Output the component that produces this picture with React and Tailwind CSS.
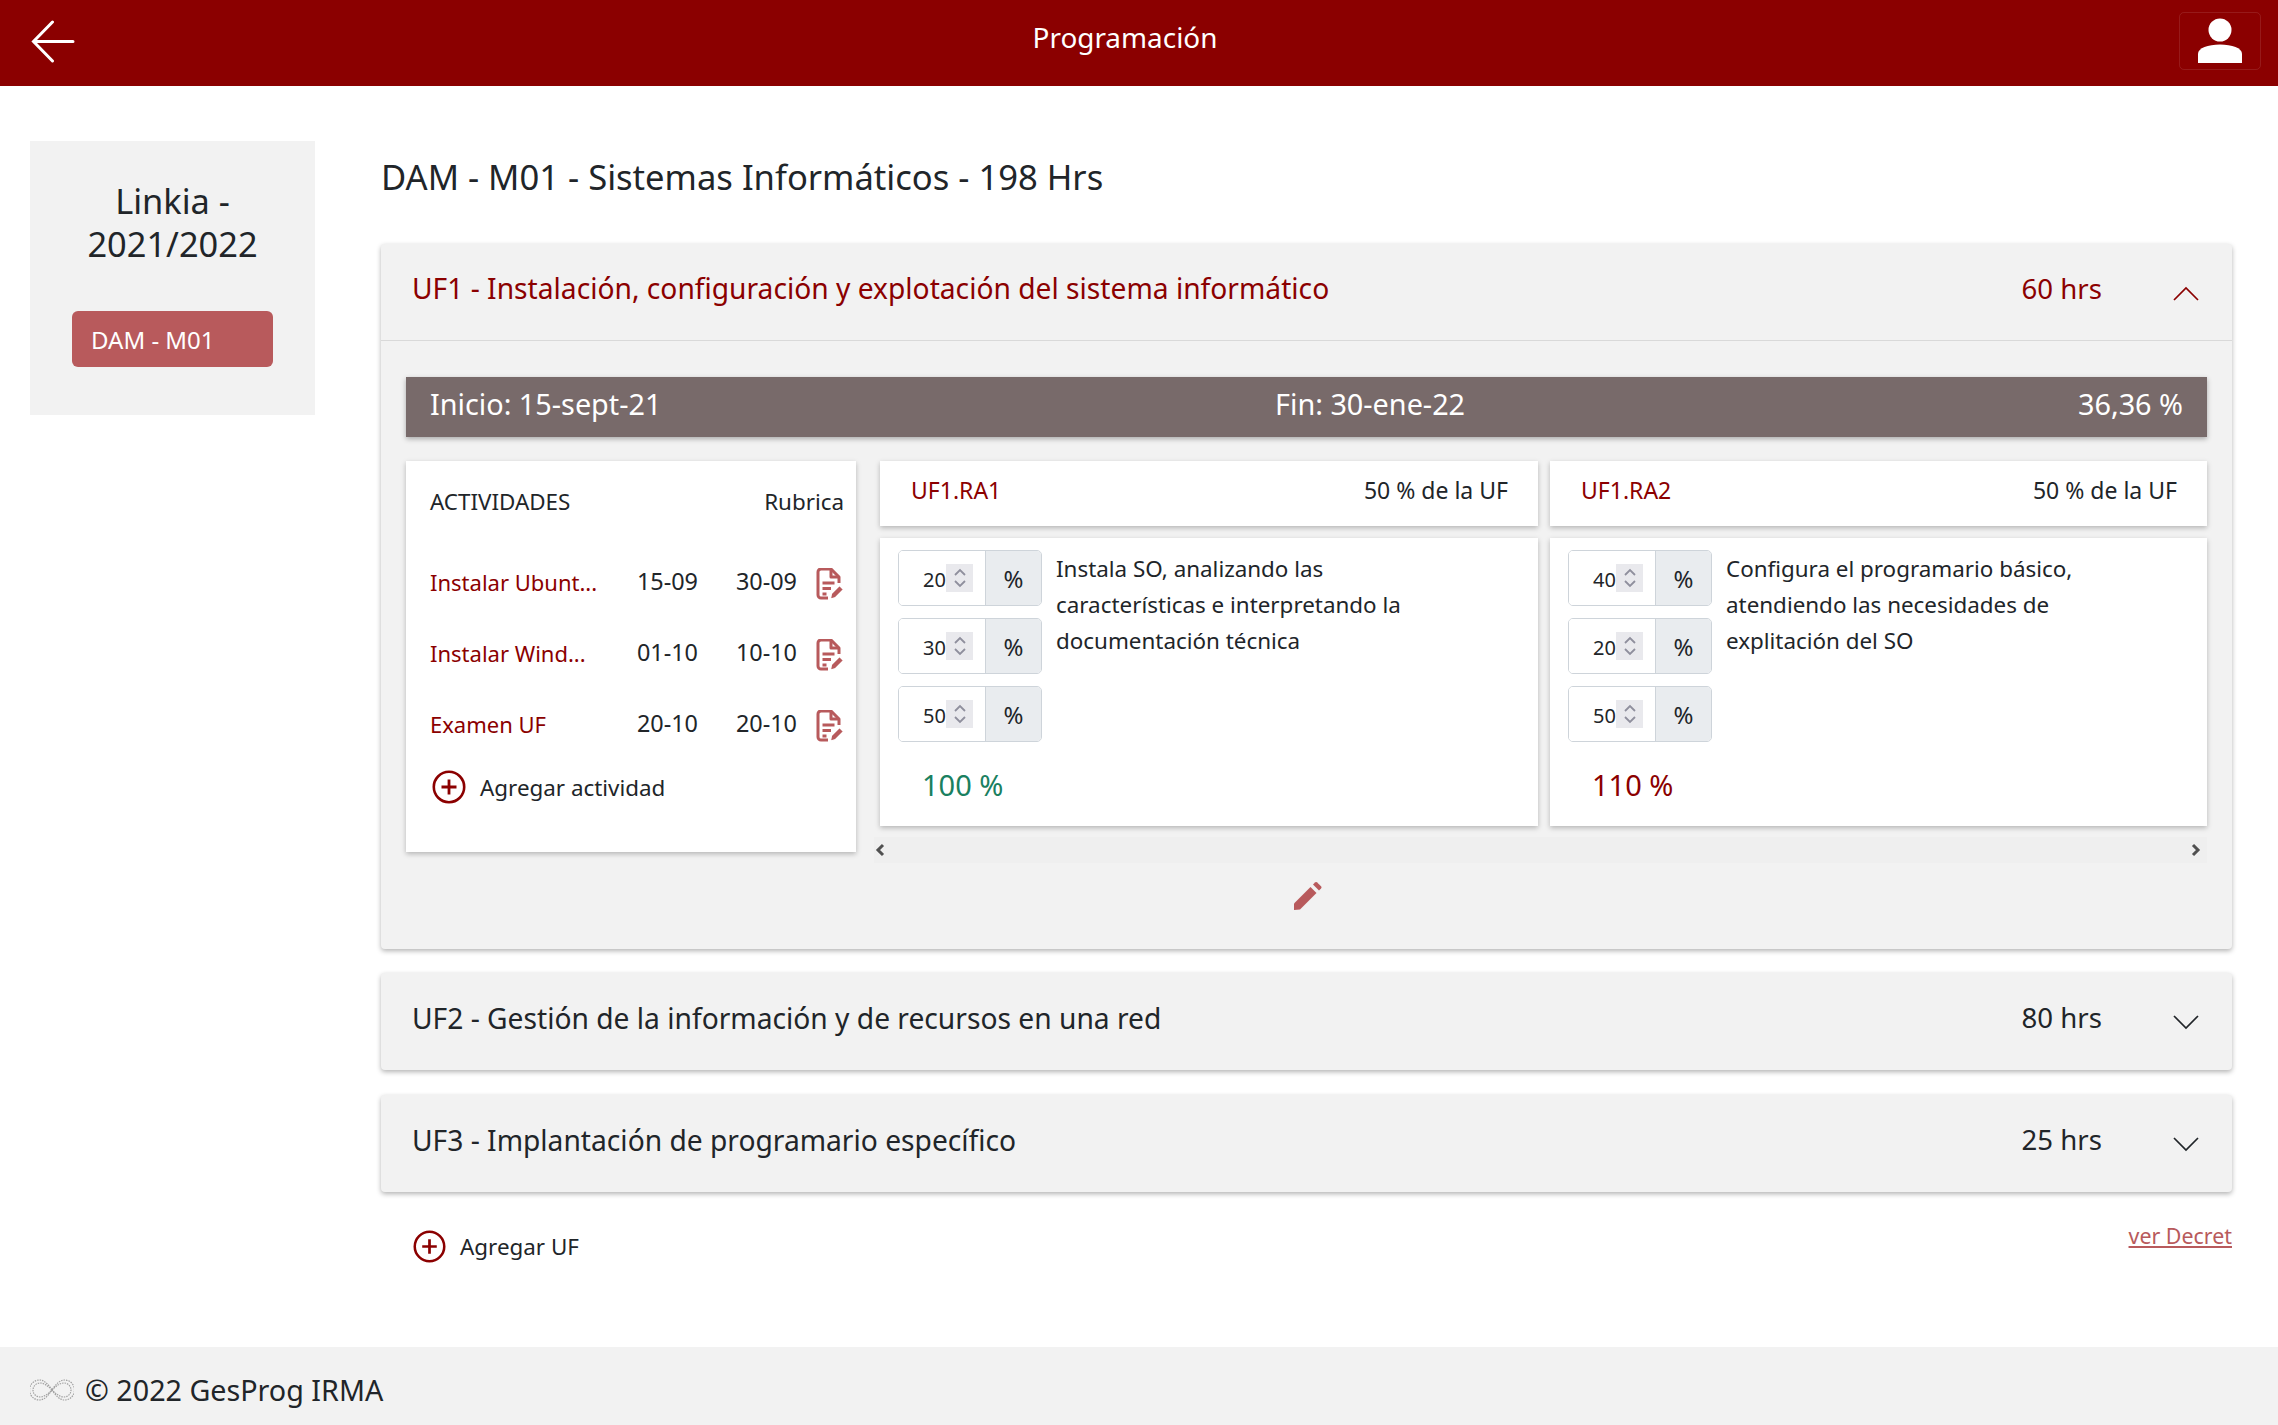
import React from "react";

const activities = [
  { name: "Instalar Ubunt...", start: "15-09", end: "30-09" },
  { name: "Instalar Wind...", start: "01-10", end: "10-10" },
  { name: "Examen UF", start: "20-10", end: "20-10" },
];

const results = [
  {
    code: "UF1.RA1",
    values: ["20", "30", "50"],
    total: "100 %",
    totalClass: "text-[#1a8060]",
    lines: ["Instala SO, analizando las", "características e interpretando la", "documentación técnica"],
  },
  {
    code: "UF1.RA2",
    values: ["40", "20", "50"],
    total: "110 %",
    totalClass: "text-[#8b0000]",
    lines: ["Configura el programario básico,", "atendiendo las necesidades de", "explitación del SO"],
  },
];

const PlusCircle = ({ size }) => (
  <svg width={size} height={size} viewBox="0 0 34 34" fill="none" stroke="#8b0000" className="shrink-0">
    <circle cx="17" cy="17" r="15.2" strokeWidth="2.6" />
    <path d="M17 9.5v15M9.5 17h15" strokeWidth="2.8" />
  </svg>
);

const RubricIcon = () => (
  <svg width="28" height="32" viewBox="0 0 28 32" fill="none" stroke="#b85a5c" strokeWidth="3" className="shrink-0">
    <path d="M12 30H5a3 3 0 0 1-3-3V4a3 3 0 0 1 3-3h10l8 8v6" strokeLinejoin="round" />
    <path d="M15 1.5V9h8" strokeLinejoin="round" />
    <path d="M6.5 15h12M6.5 20.5h8.5M6.5 26h4" />
    <path d="M14.5 31l1-5.5 8-8 4 4-8 8z" fill="#b85a5c" stroke="white" strokeWidth="1.2" />
  </svg>
);

const Chevron = ({ up }) => (
  <svg width="26" height="15" viewBox="0 0 26 15" fill="none" stroke={up ? "#8b0000" : "#212529"} strokeWidth="1.7">
    <path d={up ? "M1 14L13 2l12 12" : "M1 1l12 12L25 1"} />
  </svg>
);

const Percent = ({ value }) => (
  <div className="flex h-[56px] w-[144px] overflow-hidden rounded-[5px] border border-[#ced4da]">
    <div className="flex w-[86px] items-center justify-end bg-white">
      <span className="pt-[3px] text-[20px] text-[#212529]">{value}</span>
      <span className="mr-[12px] flex h-[28px] w-[27px] items-center justify-center bg-[#e9e9ed]">
        <svg width="14" height="24" viewBox="0 0 14 24" fill="none" stroke="#8f8f9d" strokeWidth="1.8">
          <path d="M2 9l5-5 5 5M2 15l5 5 5-5" />
        </svg>
      </span>
    </div>
    <div className="flex flex-1 items-center justify-center border-l border-[#ced4da] bg-[#e9ecef] pt-[2px] text-[24px] text-[#212529]">
      %
    </div>
  </div>
);

const Result = ({ item }) => (
  <div className="flex w-[657px] shrink-0 flex-col gap-[12px] first:w-[658px]">
    <div className="flex h-[65px] items-center justify-between bg-white pb-[7px] pl-[31px] pr-[30px] text-[23px] shadow-[0_2px_5px_rgba(0,0,0,0.25)]">
      <span className="text-[#8b0000]">{item.code}</span>
      <span className="text-[#212529]">50 % de la UF</span>
    </div>
    <div className="h-[288px] bg-white pl-[18px] pt-[12px] shadow-[0_2px_5px_rgba(0,0,0,0.25)]">
      <div className="flex gap-[14px]">
        <div className="flex flex-col gap-[12px]">
          {item.values.map((v, i) => (
            <Percent key={i} value={v} />
          ))}
        </div>
        <div className="pt-[1px] text-[22.4px] leading-[36px] text-[#212529]">
          {item.lines.map((l) => (
            <div key={l}>{l}</div>
          ))}
        </div>
      </div>
      <div className={`mt-[24px] pl-[24px] text-[29px] leading-[38px] ${item.totalClass}`}>{item.total}</div>
    </div>
  </div>
);

const Activities = () => (
  <div className="h-[391px] w-[450px] shrink-0 bg-white pl-[24px] pr-[12px] pt-[24px] text-[22.4px] text-[#212529] shadow-[0_2px_5px_rgba(0,0,0,0.25)]">
    <div className="flex h-[34px] items-center justify-between">
      <span>ACTIVIDADES</span>
      <span>Rubrica</span>
    </div>
    <div className="mt-[43px] flex flex-col gap-[31px]">
      {activities.map((a) => (
        <div key={a.name} className="flex h-[40px] items-center">
          <span className="w-[186px] text-[22px] text-[#8b0000]">{a.name}</span>
          <span className="w-[82px] text-right text-[23.4px]">{a.start}</span>
          <span className="w-[99px] text-right text-[23.4px]">{a.end}</span>
          <span className="ml-[19px] mt-[4px]">
            <RubricIcon />
          </span>
        </div>
      ))}
    </div>
    <div className="ml-[2px] mt-[25px] flex items-center gap-[14px]">
      <PlusCircle size={34} />
      <span className="pt-[2px]">Agregar actividad</span>
    </div>
  </div>
);

const Collapsed = ({ title, hours }) => (
  <div className="flex h-[97px] items-center rounded-[4px] bg-[#f2f2f2] pl-[31px] pr-[33px] text-[28.2px] text-[#212529] shadow-[0_2px_5px_rgba(0,0,0,0.3)]">
    <span className="flex-1 pb-[7px]">{title}</span>
    <span className="mr-[71px] pb-[7px] text-[27.6px]">{hours}</span>
    <span className="mt-[2px]">
      <Chevron />
    </span>
  </div>
);

export default function App() {
  return (
    <div
      className="flex h-screen flex-col overflow-hidden bg-white"
      style={{ fontFamily: '"Noto Sans", "Open Sans", sans-serif' }}
    >
      <header className="relative flex h-[86px] shrink-0 items-start justify-between bg-[#8b0000] pl-[31px] pr-[17px]">
        <svg width="44" height="44" viewBox="0 0 44 44" fill="none" stroke="white" strokeWidth="3" strokeLinecap="round" className="mt-[20px]">
          <path d="M42 21.5H3M21.5 2L2.5 21.5 21.5 41" />
        </svg>
        <div className="absolute left-0 right-[28px] top-[17px] text-center text-[27.9px] leading-[40px] text-white">Programación</div>
        <div className="mt-[12px] flex h-[58px] w-[82px] items-center justify-center rounded-[5px] border border-white/10">
          <svg width="46" height="46" viewBox="0 0 46 46" fill="white">
            <circle cx="23" cy="12" r="11.5" />
            <path d="M1 45v-9c0-6 10-9.5 22-9.5S45 30 45 36v9z" />
          </svg>
        </div>
      </header>

      <main className="flex flex-1 pl-[30px] pr-[47px]">
        <aside className="mt-[55px] h-[274px] w-[285px] shrink-0 bg-[#f2f2f2] px-[42px] pt-[38px]">
          <div className="text-center text-[34.4px] leading-[43px] text-[#212529]">Linkia - 2021/2022</div>
          <div className="mt-[46px] flex h-[56px] items-center rounded-[6px] bg-[#b85a5c] pl-[19px] pt-[2px] text-[24px] text-white">DAM - M01</div>
        </aside>

        <section className="ml-[66px] flex-1">
          <h1 className="mt-[66px] text-[34.6px] leading-[50px] text-[#212529]">DAM - M01 - Sistemas Informáticos - 198 Hrs</h1>

          <div className="mt-[42px] rounded-[4px] bg-[#f2f2f2] shadow-[0_2px_5px_rgba(0,0,0,0.3)]">
            <div className="flex h-[97px] items-center border-b border-[#d9d9d9] pl-[31px] pr-[33px] text-[28.2px] text-[#8b0000]">
              <span className="flex-1 pb-[7px]">UF1 - Instalación, configuración y explotación del sistema informático</span>
              <span className="mr-[71px] pb-[7px] text-[27.6px]">60 hrs</span>
              <span className="mt-[2px]">
                <Chevron up />
              </span>
            </div>
            <div className="h-[608px] px-[25px] pt-[36px]">
              <div className="flex h-[60px] items-center bg-[#786a6a] pb-[7px] pl-[24px] pr-[24px] text-[28.8px] text-white shadow-[0_2px_5px_rgba(0,0,0,0.3)]">
                <span className="w-[845px]">Inicio: 15-sept-21</span>
                <span className="flex-1">Fin: 30-ene-22</span>
                <span>36,36 %</span>
              </div>
              <div className="mt-[24px] flex">
                <Activities />
                <div className="ml-[18px] flex-1">
                  <div className="flex gap-[12px] pl-[6px]">
                    {results.map((r) => (
                      <Result key={r.code} item={r} />
                    ))}
                  </div>
                  <div className="mt-[11px] flex h-[26px] items-center justify-between bg-[#efefef] pr-[5px]">
                    <svg width="12" height="14" viewBox="0 0 12 14" fill="none" stroke="#505050" strokeWidth="3">
                      <path d="M9 2L4 7l5 5" />
                    </svg>
                    <svg width="12" height="14" viewBox="0 0 12 14" fill="none" stroke="#505050" strokeWidth="3">
                      <path d="M3 2l5 5-5 5" />
                    </svg>
                  </div>
                  <div className="mt-[19px] pl-[419px]">
                    <svg width="29" height="28" viewBox="0 0 29 28" fill="#b85a5c">
                      <path d="M1 21.5L17.5 5l6 6L7 27.5 1 28z" />
                      <path d="M20 2.5l2-2a1.6 1.6 0 0 1 2.2 0l3.8 3.8a1.6 1.6 0 0 1 0 2.2l-2 2z" />
                    </svg>
                  </div>
                </div>
              </div>
            </div>
          </div>

          <div className="mt-[24px] flex flex-col gap-[25px]">
            <Collapsed title="UF2 - Gestión de la información y de recursos en una red" hours="80 hrs" />
            <Collapsed title="UF3 - Implantación de programario específico" hours="25 hrs" />
          </div>

          <div className="mt-[30px] flex items-start justify-between">
            <div className="ml-[32px] mt-[7px] flex items-center gap-[14px] text-[22.4px] text-[#212529]">
              <PlusCircle size={33} />
              <span className="pt-[1px]">Agregar UF</span>
            </div>
            <a className="text-[21.4px] leading-[28px] text-[#b85a5c] underline">ver Decret</a>
          </div>
        </section>
      </main>

      <footer className="flex h-[78px] shrink-0 items-center bg-[#f2f2f2] pl-[30px] pt-[8px] text-[28.7px] text-[#212529]">
        <svg width="44" height="22" viewBox="0 0 44 22" fill="none" stroke="#a0a0a0" strokeWidth="1.2" strokeDasharray="1.5 1" className="mr-[11px]">
          <path d="M22 11C18 5 14 1 9.5 1a10 10 0 0 0 0 20C14 21 18 17 22 11c4-6 8-10 12.5-10a10 10 0 0 1 0 20C30 21 26 17 22 11z" />
          <path d="M22 11C18 7 14 4 10 4a7 7 0 0 0 0 14c4 0 8-3 12-7 4-4 8-7 12-7a7 7 0 0 1 0 14c-4 0-8-3-12-7z" />
        </svg>
        © 2022 GesProg IRMA
      </footer>
    </div>
  );
}
